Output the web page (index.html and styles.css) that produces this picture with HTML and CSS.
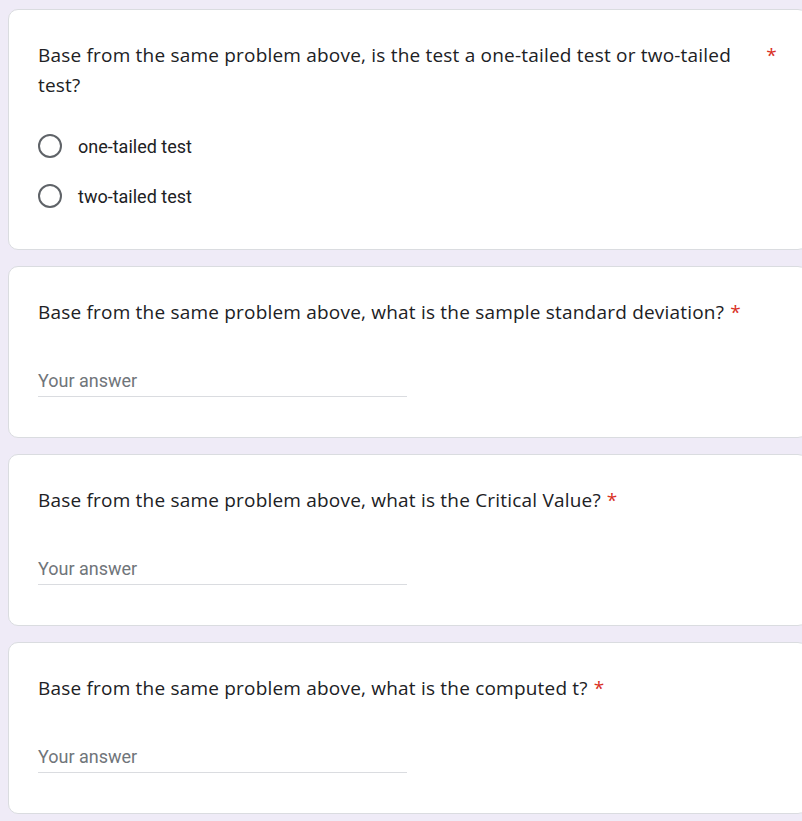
FILE: index.html
```html
<!DOCTYPE html>
<html>
<head>
<meta charset="utf-8">
<link rel="stylesheet" href="styles.css">
</head>
<body>
<div class="form">
  <div class="card card-radio">
    <div class="title"><span class="title-text">Base from the same problem above, is the test a one-tailed test or two-tailed test?</span><span class="req">*</span></div>
    <div class="options">
      <div class="option"><span class="radio"></span><span class="opt-label">one-tailed test</span></div>
      <div class="option"><span class="radio"></span><span class="opt-label">two-tailed test</span></div>
    </div>
  </div>
  <div class="card">
    <div class="title"><span class="title-text">Base from the same problem above, what is the sample standard deviation?</span><span class="req">*</span></div>
    <div class="answer"><span class="placeholder">Your answer</span></div>
  </div>
  <div class="card">
    <div class="title"><span class="title-text">Base from the same problem above, what is the Critical Value?</span><span class="req">*</span></div>
    <div class="answer"><span class="placeholder">Your answer</span></div>
  </div>
  <div class="card">
    <div class="title"><span class="title-text">Base from the same problem above, what is the computed t?</span><span class="req">*</span></div>
    <div class="answer"><span class="placeholder">Your answer</span></div>
  </div>
</div>
</body>
</html>
```

FILE: styles.css
```css
html, body {
  margin: 0;
  padding: 0;
  overflow: hidden;
  background: #efebf7;
}

.form {
  display: flex;
  flex-direction: column;
  gap: 16px;
  padding: 9px 0 0 8px;
  width: 800px;
}

.card {
  box-sizing: border-box;
  width: 800px;
  background: #ffffff;
  border: 1px solid #dadce0;
  border-radius: 10px;
  padding: 30px 30px 30px 29px;
}

.card-radio {
  padding-bottom: 28px;
}

.title {
  display: flex;
  align-items: flex-start;
  font-family: "Open Sans", "Liberation Sans", sans-serif;
  font-size: 19px;
  letter-spacing: 0.2px;
  line-height: 30px;
  color: #202124;
}

.title-text {
  flex: 0 1 auto;
}

.req {
  flex: 0 0 auto;
  color: #d93025;
  padding-left: 6px;
}

.options {
  margin-top: 20px;
  display: flex;
  flex-direction: column;
}

.option {
  display: flex;
  align-items: center;
  height: 50px;
}

.option:first-child {
  margin-top: 1px;
}

.radio {
  box-sizing: border-box;
  width: 24px;
  height: 24px;
  border: 2.5px solid #5f6368;
  border-radius: 50%;
  flex: 0 0 auto;
}

.opt-label {
  margin-left: 16px;
  font-family: Roboto, "Liberation Sans", sans-serif;
  font-size: 18px;
  color: #202124;
}

.answer {
  margin-top: 38px;
  margin-bottom: 10px;
  width: 369px;
  height: 31px;
  border-bottom: 1px solid #dadce0;
  display: flex;
  align-items: center;
}

.placeholder {
  font-family: Roboto, "Liberation Sans", sans-serif;
  font-size: 18px;
  color: #70757a;
}
```
